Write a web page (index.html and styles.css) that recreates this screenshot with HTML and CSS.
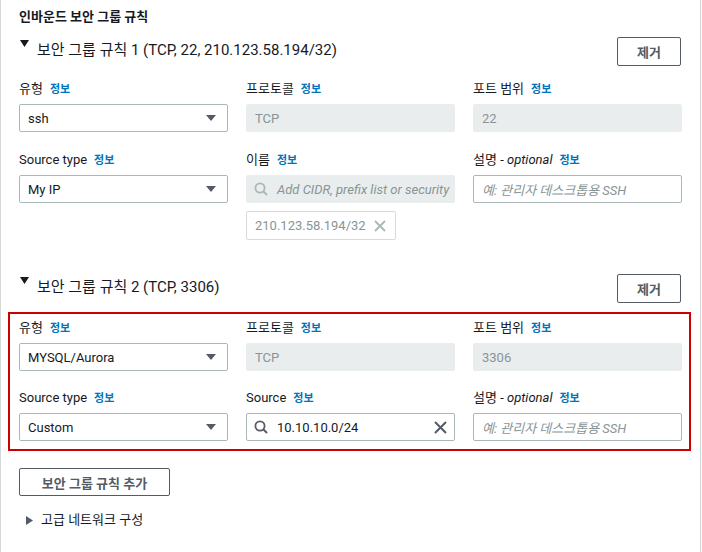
FILE: index.html
```html
<!DOCTYPE html>
<html>
<head>
    <link rel="stylesheet" href="styles.css">
</head>
<body>
    <div class="panel">
        <div class="section-title">인바운드 보안 그룹 규칙</div>

        <div class="rule-head">
            <div class="rule-title">
                <svg class="caret" width="9" height="7" viewBox="0 0 9 7"><polygon points="0,0 9,0 4.5,7" fill="#16191f"/></svg>
                <span>보안 그룹 규칙 1 (TCP, 22, 210.123.58.194/32)</span>
            </div>
            <button class="btn btn-remove">제거</button>
        </div>

        <div class="fields">
            <div class="field">
                <div class="label">유형<a class="info">정보</a></div>
                <div class="select"><span>ssh</span><svg width="10" height="6" viewBox="0 0 10 6"><polygon points="0,0 10,0 5,6" fill="#545b64"/></svg></div>
            </div>
            <div class="field">
                <div class="label">프로토콜<a class="info">정보</a></div>
                <div class="input disabled">TCP</div>
            </div>
            <div class="field">
                <div class="label">포트 범위<a class="info">정보</a></div>
                <div class="input disabled">22</div>
            </div>

            <div class="field">
                <div class="label">Source type<a class="info">정보</a></div>
                <div class="select"><span>My IP</span><svg width="10" height="6" viewBox="0 0 10 6"><polygon points="0,0 10,0 5,6" fill="#545b64"/></svg></div>
            </div>
            <div class="field">
                <div class="label">이름<a class="info">정보</a></div>
                <div class="input disabled search">
                    <svg class="icon" width="14" height="14" viewBox="0 0 14 14"><circle cx="6" cy="6" r="4.6" fill="none" stroke="#aab7b8" stroke-width="1.8"/><line x1="9.4" y1="9.4" x2="13" y2="13" stroke="#aab7b8" stroke-width="2"/></svg>
                    <span class="placeholder">Add CIDR, prefix list or security</span>
                </div>
                <div class="token">
                    <span>210.123.58.194/32</span>
                    <svg width="12" height="12" viewBox="0 0 12 12"><path d="M1 1 L11 11 M11 1 L1 11" stroke="#aab7b8" stroke-width="1.8"/></svg>
                </div>
            </div>
            <div class="field">
                <div class="label">설명 - <i>&nbsp;optional</i><a class="info">정보</a></div>
                <div class="input"><span class="placeholder">예: 관리자 데스크톱용 SSH</span></div>
            </div>
        </div>

        <div class="rule-head second">
            <div class="rule-title">
                <svg class="caret" width="9" height="7" viewBox="0 0 9 7"><polygon points="0,0 9,0 4.5,7" fill="#16191f"/></svg>
                <span>보안 그룹 규칙 2 (TCP, 3306)</span>
            </div>
            <button class="btn btn-remove">제거</button>
        </div>

        <div class="highlight">
            <div class="fields">
                <div class="field">
                    <div class="label">유형<a class="info">정보</a></div>
                    <div class="select"><span>MYSQL/Aurora</span><svg width="10" height="6" viewBox="0 0 10 6"><polygon points="0,0 10,0 5,6" fill="#545b64"/></svg></div>
                </div>
                <div class="field">
                    <div class="label">프로토콜<a class="info">정보</a></div>
                    <div class="input disabled">TCP</div>
                </div>
                <div class="field">
                    <div class="label">포트 범위<a class="info">정보</a></div>
                    <div class="input disabled">3306</div>
                </div>

                <div class="field">
                    <div class="label">Source type<a class="info">정보</a></div>
                    <div class="select"><span>Custom</span><svg width="10" height="6" viewBox="0 0 10 6"><polygon points="0,0 10,0 5,6" fill="#545b64"/></svg></div>
                </div>
                <div class="field">
                    <div class="label">Source<a class="info">정보</a></div>
                    <div class="input search">
                        <svg class="icon" width="14" height="14" viewBox="0 0 14 14"><circle cx="6" cy="6" r="4.6" fill="none" stroke="#545b64" stroke-width="1.8"/><line x1="9.4" y1="9.4" x2="13" y2="13" stroke="#545b64" stroke-width="2"/></svg>
                        <span class="value">10.10.10.0/24</span>
                        <svg class="clear" width="13" height="13" viewBox="0 0 13 13"><path d="M1 1 L12 12 M12 1 L1 12" stroke="#545b64" stroke-width="2"/></svg>
                    </div>
                </div>
                <div class="field">
                    <div class="label">설명 - <i>&nbsp;optional</i><a class="info">정보</a></div>
                    <div class="input"><span class="placeholder">예: 관리자 데스크톱용 SSH</span></div>
                </div>
            </div>
        </div>

        <button class="btn btn-add">보안 그룹 규칙 추가</button>

        <div class="advanced">
            <svg width="7" height="9" viewBox="0 0 7 9"><polygon points="0,0 7,4.5 0,9" fill="#545b64"/></svg>
            <span>고급 네트워크 구성</span>
        </div>
    </div>
</body>
</html>
```

FILE: styles.css
```css
body {
    margin: 0;
    background-color: #f7f7f7;
    font-family: Roboto, "Noto Sans CJK KR", sans-serif;
    font-size: 13px;
    color: #16191f;
}
.panel {
    width: 701px;
    height: 552px;
    box-sizing: border-box;
    background-color: #fff;
    border-left: 1px solid #d5dbdb;
    border-right: 1px solid #d5dbdb;
    padding: 7px 18px 0 18px;
    display: flex;
    flex-direction: column;
}
.section-title {
    font-weight: bold;
    height: 20px;
    line-height: 20px;
}
.rule-head {
    display: flex;
    justify-content: space-between;
    height: 29px;
    margin-top: 10px;
}
.rule-head.second {
    margin-top: 34px;
}
.rule-title {
    display: flex;
    align-items: flex-start;
    height: 20px;
    margin-top: 3px;
    font-size: 15px;
    line-height: 20px;
}
.caret {
    display: block;
    margin: 0 8px 0 1px;
}
.btn {
    height: 29px;
    box-sizing: border-box;
    background-color: #fff;
    border: 1px solid #545b64;
    border-radius: 2px;
    color: #545b64;
    font-family: Roboto, "Noto Sans CJK KR", sans-serif;
    font-size: 13px;
    font-weight: bold;
    padding: 0;
    cursor: pointer;
}
.btn-remove {
    width: 64px;
    margin-right: 1px;
}
.btn-add {
    width: 151px;
    height: 28px;
    margin-top: 17px;
    flex-shrink: 0;
}
.fields {
    display: grid;
    grid-template-columns: 209px 209px 209px;
    column-gap: 18px;
    row-gap: 18px;
    margin-top: 13px;
    align-items: start;
}
.highlight {
    margin: 9px -9px 0 -11px;
    border: 2px solid #cc0000;
    padding: 4px 7px 8px 9px;
}
.highlight .fields {
    margin-top: 0;
    row-gap: 17px;
}
.label {
    display: flex;
    align-items: baseline;
    height: 20px;
    line-height: 20px;
    margin-bottom: 5px;
    white-space: nowrap;
}
.info {
    margin-left: 7px;
    font-size: 11px;
    font-weight: bold;
    color: #0073bb;
}
.select,
.input {
    height: 28px;
    box-sizing: border-box;
    border: 1px solid #aab7b8;
    border-radius: 2px;
    display: flex;
    align-items: center;
    padding: 0 11px 0 8px;
    overflow: hidden;
    white-space: nowrap;
}
.select {
    justify-content: space-between;
}
.input.disabled {
    background-color: #eaeded;
    border-color: #eaeded;
    color: #879596;
}
.input.search {
    padding-left: 7px;
    padding-right: 7px;
}
.icon {
    flex-shrink: 0;
    margin-right: 9px;
}
.value {
    flex: 1;
}
.placeholder {
    color: #879596;
    font-style: italic;
}
.token {
    width: 150px;
    height: 29px;
    box-sizing: border-box;
    margin-top: 8px;
    border: 1px solid #d5dbdb;
    border-radius: 2px;
    display: flex;
    align-items: center;
    justify-content: space-between;
    padding: 0 9px 0 8px;
    color: #879596;
}
.advanced {
    display: flex;
    align-items: center;
    height: 20px;
    margin-top: 14px;
    line-height: 20px;
    color: #16191f;
}
.advanced svg {
    margin: 0 8px 0 7px;
}
```
